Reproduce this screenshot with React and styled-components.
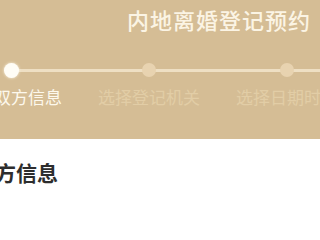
import React from "react";
import styled, { createGlobalStyle } from "styled-components";

const Global = createGlobalStyle`
  html, body { margin: 0; padding: 0; background: #ffffff; overflow: hidden; }
  body { font-family: "Noto Sans CJK SC", "Noto Sans", sans-serif; }
  #root { width: 320px; height: 240px; overflow: hidden; }
`;

const Page = styled.div`
  width: 620px;
  margin-left: -58px;
  display: flex;
  flex-direction: column;
`;

const Header = styled.header`
  height: 139px;
  background: #d5bd95;
  display: flex;
  flex-direction: column;
`;

const TitleRow = styled.div`
  width: 378px;
  height: 38px;
  display: flex;
  justify-content: flex-end;
  align-items: center;
  box-sizing: border-box;
  padding-right: 9px;
`;

const Title = styled.h1`
  margin: 0;
  font-size: 22px;
  font-weight: 500;
  letter-spacing: 1px;
  color: #fbf4e4;
  line-height: 38px;
`;

const Stepper = styled.ol`
  list-style: none;
  margin: 20px 0 0;
  padding: 0;
  display: flex;
`;

const Step = styled.li`
  width: 138px;
  display: flex;
  flex-direction: column;
  align-items: center;
`;

const Track = styled.div`
  width: 100%;
  height: 24px;
  display: flex;
  justify-content: center;
  align-items: center;
  background-image: linear-gradient(#eedfc3, #eedfc3);
  background-repeat: no-repeat;
  background-size: ${(p) => (p.$first ? "50% 3px" : "100% 3px")};
  background-position: ${(p) => (p.$first ? "right center" : "center")};
`;

const Dot = styled.span`
  width: ${(p) => (p.$active ? "15px" : "14px")};
  height: ${(p) => (p.$active ? "15px" : "14px")};
  border-radius: 50%;
  background: ${(p) => (p.$active ? "#fffdf6" : "#e8d3b0")};
  box-shadow: ${(p) => (p.$active ? "0 0 3px rgba(255,250,235,0.9)" : "none")};
`;

const Label = styled.span`
  margin-top: 5px;
  font-size: 17px;
  line-height: 20px;
  white-space: nowrap;
  color: ${(p) => (p.$active ? "#fdf8ec" : "#e2cda6")};
`;

const Content = styled.section`
  background: #ffffff;
  padding: 21px 0 0 32px;
`;

const Heading = styled.h2`
  margin: 0;
  font-size: 21px;
  line-height: 24px;
  font-weight: 700;
  color: #2d2d2d;
`;

const steps = ["填写双方信息", "选择登记机关", "选择日期时间", "确认预约信息"];

export default function App() {
  return (
    <>
      <Global />
      <Page>
        <Header>
          <TitleRow>
            <Title>内地离婚登记预约</Title>
          </TitleRow>
          <Stepper>
            {steps.map((s, i) => (
              <Step key={s}>
                <Track $first={i === 0}>
                  <Dot $active={i === 0} />
                </Track>
                <Label $active={i === 0}>{s}</Label>
              </Step>
            ))}
          </Stepper>
        </Header>
        <Content>
          <Heading>双方信息</Heading>
        </Content>
      </Page>
    </>
  );
}
